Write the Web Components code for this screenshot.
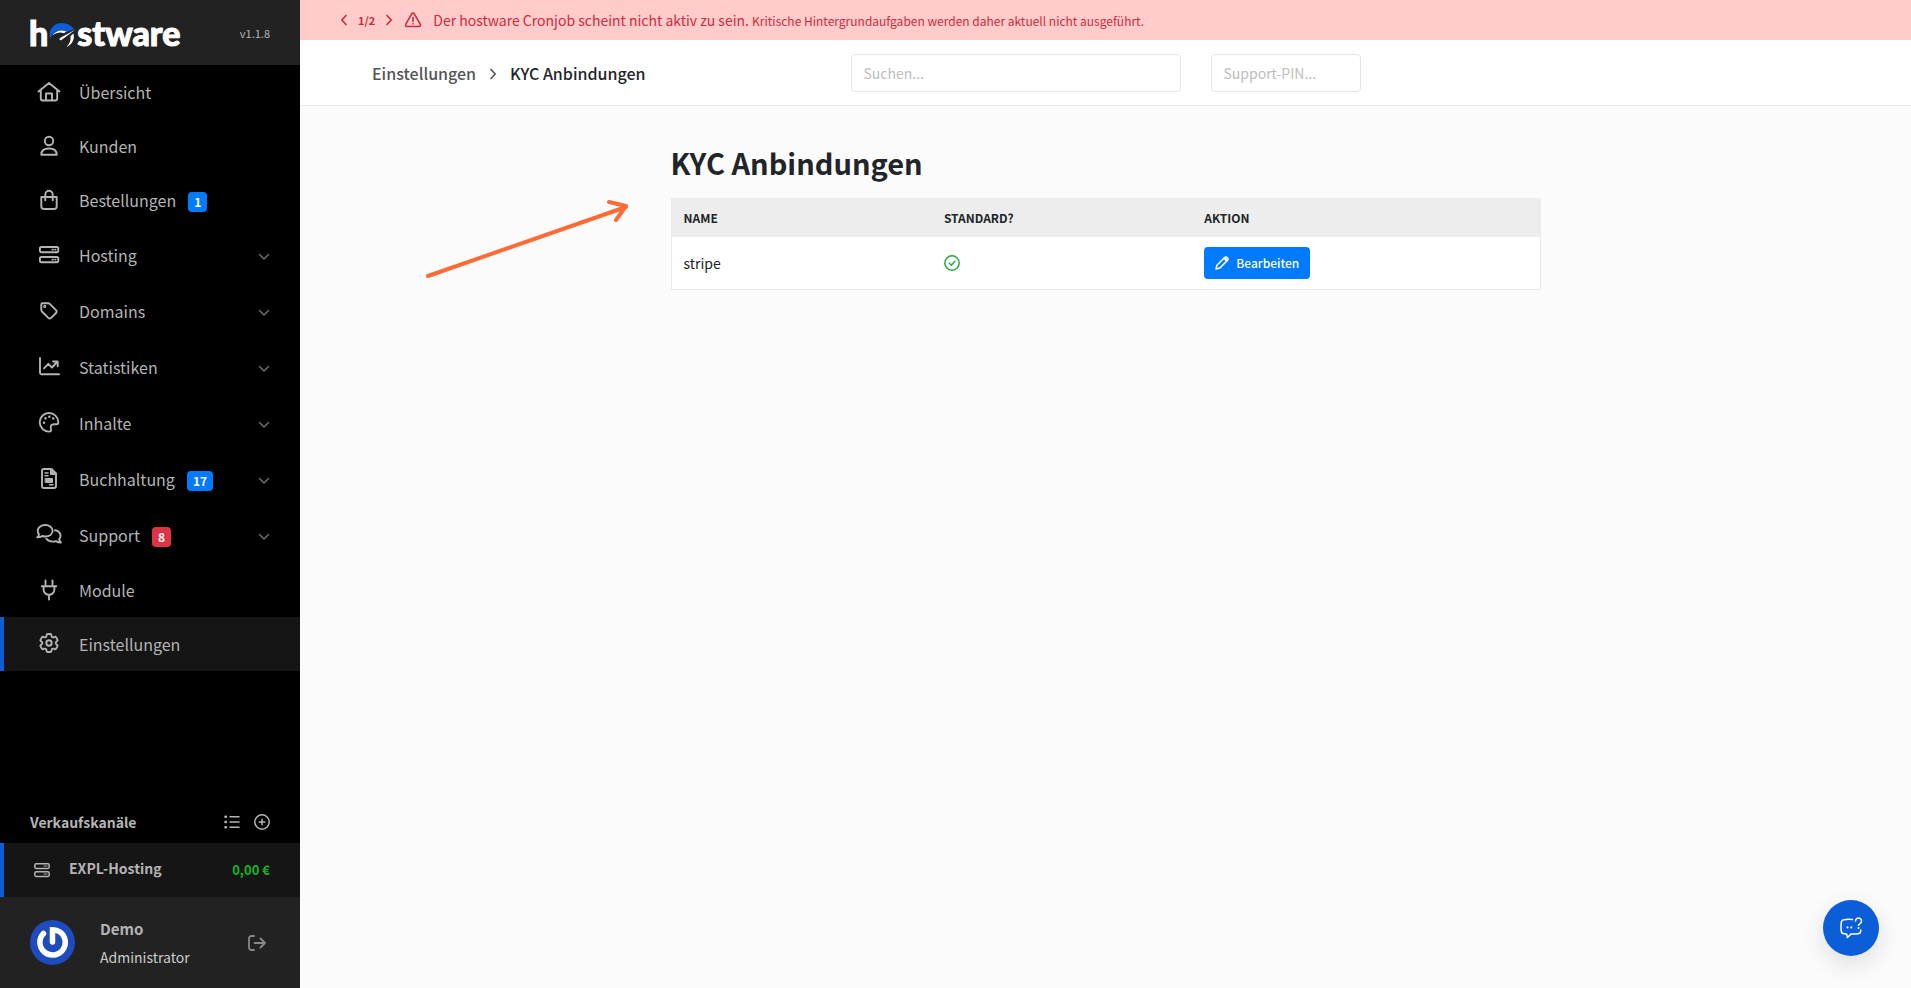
<!DOCTYPE html>
<html lang="de">
<head>
<meta charset="utf-8">
<meta name="viewport" content="width=device-width, initial-scale=1">
<title>KYC Anbindungen - hostware</title>
<style>
    :root {
        --primary: #007bff;
        --accent: #0b5ed7;
        --danger: #dc3545;
        --text: #212529;
        --side-text: #b4b4b4;
    }
    body {
        margin: 0;
        background: #fbfbfb;
        color: var(--text);
        font: 16px/24px "Noto Sans CJK SC", "Open Sans", sans-serif;
    }
</style>
</head>
<body>
<hw-app>
    <hw-sidebar slot="sidebar" version="v1.1.8">
        <hw-nav-item icon="house">Übersicht</hw-nav-item>
        <hw-nav-item icon="person">Kunden</hw-nav-item>
        <hw-nav-item icon="bag" badge="1">Bestellungen</hw-nav-item>
        <hw-nav-item icon="server" expandable>Hosting</hw-nav-item>
        <hw-nav-item icon="tag" expandable>Domains</hw-nav-item>
        <hw-nav-item icon="chart" expandable>Statistiken</hw-nav-item>
        <hw-nav-item icon="palette" expandable>Inhalte</hw-nav-item>
        <hw-nav-item icon="invoice" badge="17" expandable>Buchhaltung</hw-nav-item>
        <hw-nav-item icon="chats" badge="8" badge-type="danger" expandable>Support</hw-nav-item>
        <hw-nav-item icon="plug">Module</hw-nav-item>
        <hw-nav-item icon="gear" active>Einstellungen</hw-nav-item>
        <hw-channels slot="bottom"></hw-channels>
        <hw-user slot="bottom" name="Demo" role-name="Administrator"></hw-user>
    </hw-sidebar>
    <hw-alert page="1/2">
        Der hostware Cronjob scheint nicht aktiv zu sein.
        <span slot="detail">Kritische Hintergrundaufgaben werden daher aktuell nicht ausgeführt.</span>
    </hw-alert>
    <hw-topbar>
        <a slot="parent" href="#">Einstellungen</a>
        <span slot="current">KYC Anbindungen</span>
    </hw-topbar>
    <hw-kyc-page heading="KYC Anbindungen"></hw-kyc-page>
</hw-app>
<hw-chat-button></hw-chat-button>
<hw-arrow></hw-arrow>

<script>
// Nav icons share a 26x24 box, the smaller ones define their own
const ICONS = {
    house: ['0 0 26 24', '<path d="M2.500 11.500 13 3l10.500 8.500M4.800 10v8.500a2 2 0 0 0 2 2h12.400a2 2 0 0 0 2-2V10M10 20.500v-7h6v7"/>'],
    person: ['0 0 26 24', '<circle cx="13" cy="7" r="4.200"/><path d="M5.300 20.700c0-4 3-6.200 7.700-6.200s7.700 2.200 7.700 6.200z"/>'],
    bag: ['0 0 26 24', '<path d="M5.300 9h15.400v9.200a2.800 2.800 0 0 1-2.800 2.800H8.100a2.800 2.800 0 0 1-2.800-2.800zM9.300 12.300V6.500a3.700 3.700 0 0 1 7.400 0v5.800"/>'],
    server: ['0 0 26 24', '<rect x="3.900" y="4" width="18.400" height="5.200" rx="1.600"/><rect x="3.900" y="14" width="18.400" height="5.200" rx="1.600"/><path d="M16.500 6.600h.5M19.200 6.600h.3M16.500 16.600h.5M19.200 16.600h.3"/>'],
    tag: ['0 0 26 24', '<path d="M6.300 4.300h6a2 2 0 0 1 1.400.6l6.300 6.300a2 2 0 0 1 0 2.800l-4.900 4.900a2 2 0 0 1-2.800 0L5.900 12.500a2 2 0 0 1-.6-1.400V5.300a1 1 0 0 1 1-1z"/><circle cx="8.700" cy="7.400" r=".6"/>'],
    chart: ['0 0 26 24', '<path d="M4 3v14.800a1.500 1.500 0 0 0 1.500 1.500H23M8 13.300l4.300-4.500 3.700 3.700 5-5.500M17 6.500h4.700v4.700"/>'],
    palette: ['0 0 26 24', '<path d="M13 2a9.300 9.300 0 0 0 0 18.600c1.900 0 2.500-1.100 2-2.600-.9-2.900.2-4.800 3-4.800h2.600c1.300 0 1.800-.8 1.700-2.200A9.300 9.300 0 0 0 13 2z"/><path d="M8 11.600v.1M9.500 7.300v.1M13.300 5.600v.1M17.200 7.500v.1" stroke-width="2.400"/>'],
    invoice: ['0 0 26 24', '<path d="M8 2h7.500L20 6.500V19a2 2 0 0 1-2 2H8a2 2 0 0 1-2-2V4a2 2 0 0 1 2-2z"/><path d="M14.500 2v5.500H20zM9.500 11.500h7v4h-7z" fill="currentColor" stroke-width="1"/><path d="M9 6h3M9 8.800h3M13.500 17.800H17" stroke-width="1.500"/>'],
    chats: ['0 0 26 24', '<path d="M9.200 2c4.300 0 7.400 2.500 7.400 5.800s-3.100 5.700-7.400 5.700a9 9 0 0 1-3-.5c-1.200.8-2.800 1.400-4.900 1.400 1-1 1.600-2 1.700-3A5.100 5.100 0 0 1 1.700 7.800C1.700 4.500 5 2 9.200 2z"/><path d="M19 7.300c3.300.6 5.500 2.700 5.500 5.500 0 1.300-.5 2.500-1.400 3.400.1 1 .7 2.200 1.700 3.300-2.100 0-3.700-.6-4.900-1.400a9 9 0 0 1-3 .5c-3 0-5.300-1.100-6.500-2.900"/>'],
    plug: ['0 0 26 24', '<path d="M9.500 2.500v4M16.500 2.500v4M5.800 8.200h14.400M7.600 8.200v3.200a5.400 5.400 0 0 0 10.800 0V8.200M13 17v4.500"/>'],
    gear: ['0 0 26 24', '<g transform="translate(1 -1)"><path d="M9.594 3.940c.09-.542.56-.94 1.110-.94h2.593c.55 0 1.020.398 1.110.94l.213 1.281c.063.374.313.686.645.87.074.04.147.083.22.127.325.196.72.257 1.075.124l1.217-.456a1.125 1.125 0 0 1 1.370.49l1.296 2.247a1.125 1.125 0 0 1-.26 1.431l-1.003.827c-.293.241-.438.613-.43.992a7.723 7.723 0 0 1 0 .255c-.008.378.137.75.43.991l1.004.827c.424.35.534.955.26 1.430l-1.298 2.247a1.125 1.125 0 0 1-1.369.491l-1.217-.456c-.355-.133-.75-.072-1.076.124a6.470 6.470 0 0 1-.22.128c-.331.183-.581.495-.644.869l-.213 1.281c-.09.543-.56.94-1.110.94h-2.594c-.55 0-1.019-.398-1.110-.94l-.213-1.281c-.062-.374-.312-.686-.644-.87a6.520 6.520 0 0 1-.22-.127c-.325-.196-.72-.257-1.076-.124l-1.217.456a1.125 1.125 0 0 1-1.369-.49l-1.297-2.247a1.125 1.125 0 0 1 .26-1.431l1.004-.827c.292-.24.437-.613.43-.991a6.932 6.932 0 0 1 0-.255c.007-.38-.138-.751-.43-.992l-1.004-.827a1.125 1.125 0 0 1-.26-1.430l1.297-2.247a1.125 1.125 0 0 1 1.370-.491l1.216.456c.356.133.751.072 1.076-.124.072-.044.146-.086.22-.128.332-.183.582-.495.644-.869z"/><circle cx="12" cy="12" r="2.700"/></g>'],
    down: ['0 0 12 8', '<path d="m1.500 1.500 4.500 4.500 4.500-4.500" stroke-width="1.500"/>'],
    left: ['0 0 8 12', '<path d="M6 1.500 1.800 6 6 10.500" stroke-width="1.700"/>'],
    right: ['0 0 8 12', '<path d="M2 1.500 6.200 6 2 10.500" stroke-width="1.700"/>'],
    warning: ['0 0 18 16', '<path d="M7.700 1.900a1.500 1.500 0 0 1 2.600 0l6 10.400a1.500 1.500 0 0 1-1.300 2.200H3a1.500 1.500 0 0 1-1.300-2.200zM9 5.500v4M9 11.800v.2" stroke-width="1.600"/>'],
    list: ['0 0 16 16', '<path d="M6 2.800h9M6 8h9M6 13.200h9" stroke-width="1.500"/><path d="M1.500 2.800h.4M1.500 8h.4M1.500 13.200h.4" stroke-width="2.600"/>'],
    plus: ['0 0 16 16', '<circle cx="8" cy="8" r="7.200" stroke-width="1.500"/><path d="M8 5.200v5.600M5.200 8h5.600" stroke-width="1.500"/>'],
    rack: ['0 0 18 16', '<rect x="1.800" y="1.800" width="14.400" height="4.600" rx="1.400" stroke-width="1.500"/><rect x="1.800" y="9.800" width="14.400" height="4.600" rx="1.400" stroke-width="1.500"/><path d="M11 4.100h3M11 12.100h3" stroke="#777" stroke-width="1.500"/>'],
    logout: ['0 0 18 16', '<path d="M6 1H3.500A2.500 2.500 0 0 0 1 3.500v9A2.500 2.500 0 0 0 3.500 15H6M6.500 8H17M12.500 3.500 17 8l-4.500 4.500" stroke-width="1.800"/>'],
    check: ['0 0 16 16', '<circle cx="8" cy="8" r="7.200" stroke-width="1.500"/><path d="m5.300 8.200 2 2 3.600-4" stroke-width="1.500"/>'],
    pencil: ['0 0 14 14', '<path d="M1 13l.9-3.700 7.900-7.900a1.500 1.500 0 0 1 2.200 0l.6.6a1.500 1.500 0 0 1 0 2.200l-7.900 7.900z" stroke-width="1.500"/><path d="m9.700 2.300 2 2" stroke-width="2.600"/>']
};

class HwIcon extends HTMLElement {
    connectedCallback() {
        const [box, body] = ICONS[this.getAttribute('name')];
        const [, , w, h] = box.split(' ');
        this.attachShadow({ mode: 'open' }).innerHTML = `
            <style>
                :host { display: block; flex: none; }
                svg { display: block; }
            </style>
            <svg width="${w}" height="${h}" viewBox="${box}" fill="none" stroke="currentColor"
                stroke-width="1.900" stroke-linecap="round" stroke-linejoin="round" aria-hidden="true">${body}</svg>
        `;
    }
}

class HwApp extends HTMLElement {
    connectedCallback() {
        this.attachShadow({ mode: 'open' }).innerHTML = `
            <style>
                :host { display: flex; min-height: 100vh; }
                main { flex: 1; min-width: 0; }
            </style>
            <slot name="sidebar"></slot>
            <main><slot></slot></main>
        `;
    }
}

class HwLogo extends HTMLElement {
    connectedCallback() {
        this.attachShadow({ mode: 'open' }).innerHTML = `
            <style>
                :host { display: block; }
                a {
                    display: flex; align-items: center; color: #fff; text-decoration: none;
                    font: 900 34px/40px Lato, sans-serif; -webkit-text-stroke: 1px #fff;
                }
                svg { display: block; }
            </style>
            <a href="#" aria-label="hostware"><span>h</span>
                <svg width="29" height="30" viewBox="0 0 29 30" aria-hidden="true">
                    <path d="M2 21C0 11 6 5 14 5c5 0 9 2 12 6l-7 3c-3-2-7-2.500-10.500-.8C5 15 3.500 17.500 2 21z" fill="#0b5ed7"/>
                    <path d="M4.500 17.500c3-5 9-6 14-4l-2.500 1.800c-4-1.500-8-.6-11.500 2.200z" fill="#fff"/>
                    <path d="M27.500 11.500 13.500 22c-1.500.8-2.800-.8-1.500-2z" fill="#fff"/>
                    <path d="M25.500 15.500c1.500 6-1.500 11-7 13.500 3.500-3.500 4.500-7 4-11z" fill="#fff"/>
                </svg>
                <span>stware</span></a>
        `;
    }
}

class HwSidebar extends HTMLElement {
    connectedCallback() {
        this.attachShadow({ mode: 'open' }).innerHTML = `
            <style>
                :host {
                    display: flex; flex-direction: column; flex: none;
                    width: 300px; background: #000; color: var(--side-text);
                }
                header {
                    display: flex; align-items: center; justify-content: space-between;
                    height: 65px; padding: 0 30px 0 29px; background: #222;
                }
                small { font-size: 11px; }
                nav { flex: 1; }
            </style>
            <header><hw-logo></hw-logo><small>${this.getAttribute('version')}</small></header>
            <nav><slot></slot></nav>
            <slot name="bottom"></slot>
        `;
    }
}

class HwNavItem extends HTMLElement {
    connectedCallback() {
        const badge = this.getAttribute('badge');
        this.attachShadow({ mode: 'open' }).innerHTML = `
            <style>
                :host { display: block; }
                a {
                    display: flex; align-items: center; height: 54px; box-sizing: border-box;
                    padding: 0 30px 0 32px; border-left: 4px solid transparent;
                    color: inherit; text-decoration: none;
                }
                :host([expandable]) a { height: 56px; }
                :host([active]) a { background: #151515; border-left-color: var(--accent); }
                .label { margin-left: 17px; }
                .badge {
                    margin: 3px 0 0 12px; padding: 0 6px; border-radius: 4px;
                    background: var(--primary); color: #fff;
                    font-size: 12px; line-height: 20px; font-weight: 700;
                }
                :host([badge-type="danger"]) .badge { background: var(--danger); }
                .caret { margin: 3px 0 0 auto; color: #6c6c6c; }
            </style>
            <a href="#">
                <hw-icon name="${this.getAttribute('icon')}"></hw-icon>
                <span class="label"><slot></slot></span>
                ${badge ? `<span class="badge">${badge}</span>` : ''}
                ${this.hasAttribute('expandable') ? '<hw-icon class="caret" name="down"></hw-icon>' : ''}
            </a>
        `;
    }
}

class HwChannels extends HTMLElement {
    connectedCallback() {
        this.attachShadow({ mode: 'open' }).innerHTML = `
            <style>
                :host { display: block; }
                .head { display: flex; align-items: center; gap: 14px; height: 42px; padding: 0 30px; }
                h2 { flex: 1; margin: 0; font-size: 14px; font-weight: 700; }
                button { padding: 0; border: 0; background: none; color: inherit; cursor: pointer; }
                a {
                    display: flex; align-items: center; height: 54px;
                    padding: 0 30px 0 29px; border-left: 4px solid var(--accent);
                    background: #151515; color: inherit; text-decoration: none;
                }
                strong { flex: 1; margin-left: 18px; padding-bottom: 4px; font-size: 14px; }
                .sum { color: #12b524; font-size: 13px; font-weight: 700; }
            </style>
            <div class="head">
                <h2>Verkaufskanäle</h2>
                <button aria-label="Liste"><hw-icon name="list"></hw-icon></button>
                <button aria-label="Hinzufügen"><hw-icon name="plus"></hw-icon></button>
            </div>
            <a href="#"><hw-icon name="rack"></hw-icon><strong>EXPL-Hosting</strong><span class="sum">0,00 €</span></a>
        `;
    }
}

class HwUser extends HTMLElement {
    connectedCallback() {
        this.attachShadow({ mode: 'open' }).innerHTML = `
            <style>
                :host {
                    display: flex; align-items: center; height: 91px;
                    padding: 0 34px 0 30px; background: #222;
                }
                svg { display: block; }
                .who { flex: 1; margin-left: 25px; line-height: 28px; }
                strong, span { display: block; }
                strong { font-size: 15px; }
                span { color: #ccc; font-size: 14px; }
                button { padding: 0; border: 0; background: none; color: #888; cursor: pointer; }
            </style>
            <svg width="45" height="45" viewBox="0 0 45 45" aria-hidden="true">
                <circle cx="22.500" cy="22.500" r="22.500" fill="#1e4cbe"/>
                <path d="M13.500 13.500a12.700 12.700 0 1 0 16.500-1.500Q27 10 22.500 9.800V22" fill="none" stroke="#fff" stroke-width="5.500" stroke-linecap="round"/>
            </svg>
            <div class="who"><strong>${this.getAttribute('name')}</strong><span>${this.getAttribute('role-name')}</span></div>
            <button aria-label="Abmelden"><hw-icon name="logout"></hw-icon></button>
        `;
    }
}

class HwAlert extends HTMLElement {
    connectedCallback() {
        this.attachShadow({ mode: 'open' }).innerHTML = `
            <style>
                :host {
                    display: flex; align-items: center; height: 40px; padding: 0 40px;
                    background: #ffcbcb; color: #cf2c3c;
                }
                button { padding: 0; border: 0; background: none; color: inherit; cursor: pointer; }
                b { margin: 0 10px; font-size: 11px; }
                .sign { margin: 0 11px; }
                p { margin: 0; font-size: 14px; }
                ::slotted([slot="detail"]) { font-size: 12px; }
            </style>
            <button aria-label="Zurück"><hw-icon name="left"></hw-icon></button>
            <b>${this.getAttribute('page')}</b>
            <button aria-label="Weiter"><hw-icon name="right"></hw-icon></button>
            <hw-icon class="sign" name="warning"></hw-icon>
            <p><slot></slot><slot name="detail"></slot></p>
        `;
    }
}

class HwTopbar extends HTMLElement {
    connectedCallback() {
        this.attachShadow({ mode: 'open' }).innerHTML = `
            <style>
                :host {
                    display: grid; grid-template-columns: 1fr 510px 1fr; align-items: center;
                    height: 65px; padding: 0 72px;
                    background: #fff; border-bottom: 1px solid #ebebeb;
                }
                nav { display: flex; align-items: center; gap: 13px; font-weight: 500; }
                nav hw-icon { margin-top: 2px; color: #555; }
                ::slotted(a) { color: #555; text-decoration: none; }
                form { display: grid; grid-template-columns: 330px 150px; gap: 30px; }
                input {
                    box-sizing: border-box; width: 100%; height: 38px; padding: 0 12px;
                    border: 1px solid #e4e4e4; border-radius: 4px; background: #fff;
                    color: inherit; font: inherit; font-size: 14px;
                }
                input::placeholder { color: #bdbdbd; opacity: 1; }
            </style>
            <nav aria-label="Brotkrumen">
                <slot name="parent"></slot><hw-icon name="right"></hw-icon><slot name="current"></slot>
            </nav>
            <form>
                <input type="search" placeholder="Suchen..." aria-label="Suchen">
                <input type="text" placeholder="Support-PIN..." aria-label="Support-PIN">
            </form>
        `;
    }
}

class HwKycPage extends HTMLElement {
    connectedCallback() {
        this.attachShadow({ mode: 'open' }).innerHTML = `
            <style>
                :host { display: block; max-width: 870px; margin: 0 auto; padding: 36px 0; }
                h1 { margin: 0 0 16px; font-size: 29px; line-height: 40px; font-weight: 700; }
                table {
                    width: 100%; table-layout: fixed; border-collapse: separate; border-spacing: 0;
                    border: 1px solid #ebebeb; background: #fff;
                }
                th, td { padding: 0 12px; text-align: left; }
                th { height: 38px; background: #ededed; font-size: 12px; text-transform: uppercase; }
                td { height: 52px; font-size: 14px; }
                th:nth-child(-n+2) { width: 30%; box-sizing: border-box; }
                .ok { color: #28a745; }
                button {
                    display: flex; align-items: center; gap: 7px; height: 32px; padding: 0 11px;
                    border: 0; border-radius: 4px; background: var(--primary); color: #fff;
                    font: inherit; font-size: 12px; font-weight: 500; cursor: pointer;
                }
            </style>
            <h1>${this.getAttribute('heading')}</h1>
            <table>
                <thead><tr><th>Name</th><th>Standard?</th><th>Aktion</th></tr></thead>
                <tbody><tr>
                    <td>stripe</td>
                    <td><hw-icon class="ok" name="check"></hw-icon></td>
                    <td><button><hw-icon name="pencil"></hw-icon>Bearbeiten</button></td>
                </tr></tbody>
            </table>
        `;
    }
}

class HwChatButton extends HTMLElement {
    connectedCallback() {
        this.attachShadow({ mode: 'open' }).innerHTML = `
            <style>
                :host { position: fixed; right: 32px; bottom: 32px; }
                button {
                    display: grid; place-items: center; width: 56px; height: 56px; padding: 0;
                    border: 0; border-radius: 50%; background: var(--accent); color: #fff;
                    box-shadow: 0 8px 24px rgba(0, 0, 0, 0.12); cursor: pointer;
                }
            </style>
            <button aria-label="Hilfe">
                <svg width="24" height="24" viewBox="0 0 24 24" fill="none" stroke="currentColor" stroke-width="1.500" stroke-linecap="round" stroke-linejoin="round">
                    <path d="M13.500 3.500c-4-.3-6-.2-8.500.2A3 3 0 0 0 2.300 6.300c-.4 3-.4 6 0 9a3 3 0 0 0 2.700 2.500l2.500.2 1 3.500 3.500-3.500c2.700 0 4.800 0 7-.2a3 3 0 0 0 2.700-2.500V14"/>
                    <path d="M16.500 5a3 3 0 1 1 4.500 2.600c-1 .6-1.500 1-1.500 2"/>
                    <path d="M19.500 12v.1M8.500 11.300v.1M12.300 11.300v.1" stroke-width="2"/>
                </svg>
            </button>
        `;
    }
}

// Hint arrow that lies over the page and points at the content
class HwArrow extends HTMLElement {
    connectedCallback() {
        this.attachShadow({ mode: 'open' }).innerHTML = `
            <style>
                :host { position: absolute; left: 420px; top: 190px; pointer-events: none; }
                svg { display: block; }
            </style>
            <svg width="216" height="96" viewBox="0 0 216 96" fill="none" stroke="#ff6b35" stroke-width="4" stroke-linecap="round" stroke-linejoin="round" aria-hidden="true">
                <path d="M8 86 206 17M189 12l17 4-10 14"/>
            </svg>
        `;
    }
}

customElements.define('hw-icon', HwIcon);
customElements.define('hw-app', HwApp);
customElements.define('hw-logo', HwLogo);
customElements.define('hw-sidebar', HwSidebar);
customElements.define('hw-nav-item', HwNavItem);
customElements.define('hw-channels', HwChannels);
customElements.define('hw-user', HwUser);
customElements.define('hw-alert', HwAlert);
customElements.define('hw-topbar', HwTopbar);
customElements.define('hw-kyc-page', HwKycPage);
customElements.define('hw-chat-button', HwChatButton);
customElements.define('hw-arrow', HwArrow);
</script>
</body>
</html>
